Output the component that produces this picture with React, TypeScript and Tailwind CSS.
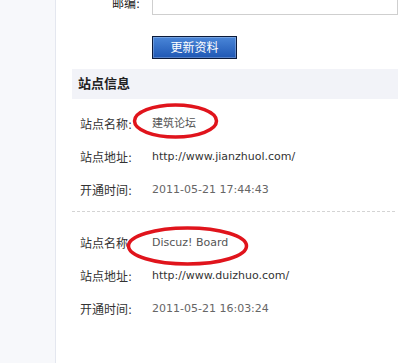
import React from "react";

const cjk = { fontFamily: '"DejaVu Sans", "Noto Sans CJK SC", sans-serif' };

function Row({ label, value, tone }: { label: string; value: string; tone: string }) {
  return (
    <div className="flex h-[33px] items-center">
      <div className="w-[80px] pl-[8px] text-[12px] text-[#333]">{label}</div>
      <div className={`text-[11px] ${tone}`}>{value}</div>
    </div>
  );
}

export default function App() {
  return (
    <div className="relative flex h-[363px] w-[398px] overflow-hidden bg-white" style={cjk}>
      <div className="w-[56px] shrink-0 border-r border-[#e4e7ef] bg-[#f7f8fb]" />
      <div className="flex-1 pl-[16px]">
        <div className="-mt-[7px] flex h-[22px] items-center">
          <div className="w-[68px] text-right text-[12px] text-[#222]">邮编:</div>
          <div className="ml-[12px] h-[22px] flex-1 border border-[#cfcfcf] bg-white" />
        </div>
        <div className="mt-[21px] pl-[80px]">
          <button className="flex h-[23px] w-[85px] items-center justify-center border border-[#0b1a3a] bg-gradient-to-b from-[#4a86d8] to-[#1f57b4] text-[12px] text-white shadow-[inset_0_0_0_1px_rgba(255,255,255,0.25)]">
            更新资料
          </button>
        </div>
        <div className="mt-[10px] flex h-[30px] items-center bg-[#f2f3f8] pl-[6px] text-[13px] font-bold text-[#222]">
          站点信息
        </div>
        <div className="pt-[9px] pb-[4px]">
          <Row label="站点名称:" value="建筑论坛" tone="text-[#555]" />
          <Row label="站点地址:" value="http://www.jianzhuol.com/" tone="text-[#333]" />
          <Row label="开通时间:" value="2011-05-21 17:44:43" tone="text-[#666]" />
        </div>
        <div className="mr-[3px] border-t border-dashed border-[#d4d4d4]" />
        <div className="pt-[15px]">
          <Row label="站点名称" value="Discuz! Board" tone="text-[#555]" />
          <Row label="站点地址:" value="http://www.duizhuo.com/" tone="text-[#333]" />
          <Row label="开通时间:" value="2011-05-21 16:03:24" tone="text-[#666]" />
        </div>
      </div>
      <svg className="pointer-events-none absolute left-0 top-0" width="398" height="363" viewBox="0 0 398 363">
        <ellipse cx="175.5" cy="121" rx="41" ry="16" fill="none" stroke="#e0141c" strokeWidth="3.5" />
        <ellipse cx="187.5" cy="246" rx="59" ry="18" fill="none" stroke="#e0141c" strokeWidth="3.5" />
      </svg>
    </div>
  );
}
